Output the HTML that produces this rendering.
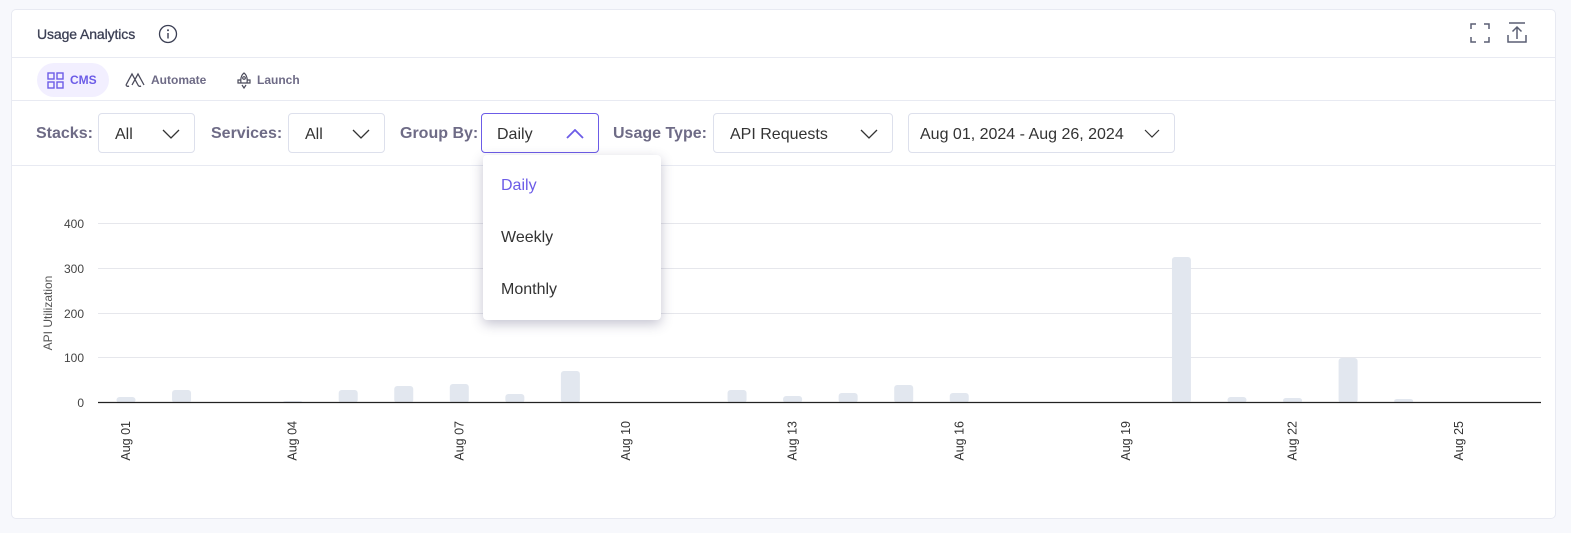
<!DOCTYPE html>
<html><head><meta charset="utf-8"><style>
*{box-sizing:border-box;margin:0;padding:0}
body{width:1571px;height:533px;background:#f7f8fc;font-family:"Liberation Sans",sans-serif;position:relative;overflow:hidden}
.card{position:absolute;left:11px;top:9px;width:1545px;height:510px;background:#fff;border:1px solid #e8eaf2;border-radius:5px}
.abs{position:absolute}
.title{left:25px;top:16px;font-size:14px;color:#3b3f54;letter-spacing:-0.1px;-webkit-text-stroke:0.3px #3b3f54}
.hr{position:absolute;left:0;right:0;height:1px;background:#e8eaf2}
.tab{position:absolute;top:53px;height:34px;border-radius:17px;font-size:12px;font-weight:bold;color:#6e6b86;display:flex;align-items:center;gap:6px;padding:0 10px}
.lbl{position:absolute;font-size:16px;color:#6e6b86;font-weight:bold;top:115px}
.sel{position:absolute;top:103px;height:40px;border:1px solid #dde0ec;border-radius:4px;font-size:16px;color:#333;display:flex;align-items:center;padding-left:16px;padding-top:3px}
.sel svg{position:absolute;right:14px;top:15px}
.menu{position:absolute;left:483px;top:155px;width:178px;height:165px;background:#fff;border-radius:4px;box-shadow:0 4px 12px rgba(60,55,100,.3)}
.menu div{position:absolute;left:18px;font-size:16px;color:#333}
</style></head><body>
<div class="card">
 <div class="abs title">Usage Analytics</div>
 <svg class="abs" style="left:146px;top:14px" width="20" height="20" viewBox="0 0 20 20"><circle cx="10" cy="10" r="8.5" fill="none" stroke="#3b3f54" stroke-width="1.3"/><circle cx="10" cy="6.2" r="1" fill="#3b3f54"/><path d="M10 9v5.5" stroke="#3b3f54" stroke-width="1.4"/></svg>
 <svg class="abs" style="left:1458px;top:13px" width="20" height="20" viewBox="0 0 20 20" fill="none" stroke="#5a5f73" stroke-width="1.5"><path d="M1 6V1h5M14 1h5v5M19 14v5h-5M6 19H1v-5"/></svg>
 <svg class="abs" style="left:1495px;top:12px" width="20" height="22" viewBox="0 0 20 22" fill="none" stroke="#5a5f73" stroke-width="1.5"><path d="M2 1h16M10 17V5M5.5 9.5L10 5l4.5 4.5M1 13v7h18v-7"/></svg>
 <div class="hr" style="top:47px"></div>
 <div class="tab" style="left:25px;background:#f2efff;color:#6c5ce7;width:72px"><svg width="17" height="17" viewBox="0 0 17 17" fill="none" stroke="#6c5ce7" stroke-width="1.4"><rect x="1" y="1" width="6" height="6"/><rect x="10" y="1" width="6" height="6"/><rect x="1" y="10" width="6" height="6"/><rect x="10" y="10" width="6" height="6"/></svg>CMS</div>
 <div class="tab" style="left:103px"><svg width="20" height="16" viewBox="0 0 20 16" fill="none" stroke="#4a4a5a" stroke-width="1.3"><path d="M1 13L7 2l6 11M7 13l6-11 6 11M1 13q1 2 3 1M13 13q1 2 3 1"/></svg>Automate</div>
 <div class="tab" style="left:215px"><svg width="14" height="17" viewBox="0 0 14 17" fill="none" stroke="#4a4a5a" stroke-width="1.2"><path d="M7 1q4 3 3 10H4Q3 4 7 1zM4 8H1v3h3M10 8h3v3h-3M5 13l2 3 2-3"/><circle cx="7" cy="6" r="1.3"/></svg>Launch</div>
 <div class="hr" style="top:90px"></div>
 <div class="lbl" style="left:24px">Stacks:</div>
 <div class="sel" style="left:86px;width:97px">All<svg width="18" height="10" viewBox="0 0 18 10"><path d="M1 1l8 8 8-8" fill="none" stroke="#333" stroke-width="1.3"/></svg></div>
 <div class="lbl" style="left:199px">Services:</div>
 <div class="sel" style="left:276px;width:97px">All<svg width="18" height="10" viewBox="0 0 18 10"><path d="M1 1l8 8 8-8" fill="none" stroke="#333" stroke-width="1.3"/></svg></div>
 <div class="lbl" style="left:388px">Group By:</div>
 <div class="sel" style="left:469px;width:118px;border:1.5px solid #6c5ce7;padding-left:15px">Daily<svg width="18" height="10" viewBox="0 0 18 10"><path d="M1 9l8-8 8 8" fill="none" stroke="#6c5ce7" stroke-width="1.8"/></svg></div>
 <div class="lbl" style="left:601px">Usage Type:</div>
 <div class="sel" style="left:701px;width:180px">API Requests<svg width="18" height="10" viewBox="0 0 18 10"><path d="M1 1l8 8 8-8" fill="none" stroke="#333" stroke-width="1.3"/></svg></div>
 <div class="sel" style="left:896px;width:267px;padding-left:11px">Aug 01, 2024 - Aug 26, 2024<svg style="right:14px" width="16" height="10" viewBox="0 0 16 10"><path d="M1 1l7 7 7-7" fill="none" stroke="#333" stroke-width="1.2"/></svg></div>
 <div class="hr" style="top:155px"></div>
</div>
<svg class="abs" style="left:0;top:0" width="1571" height="533" font-family="Liberation Sans, sans-serif">
 <g stroke="#e6e7ec" stroke-width="1"><path d="M98 223.5H1541M98 268.5H1541M98 313.5H1541M98 357.5H1541"/></g>
 <g fill="#e2e7ef" id="bars"></g>
 <path d="M98 402.5H1541" stroke="#222" stroke-width="1.2"/>
 <g font-size="12" fill="#444" text-anchor="end"><text x="84" y="228">400</text><text x="84" y="273">300</text><text x="84" y="318">200</text><text x="84" y="362">100</text><text x="84" y="407">0</text></g>
 <text transform="translate(52,313) rotate(-90)" font-size="12" fill="#555" text-anchor="middle">API Utilization</text>
 <g font-size="12.5" fill="#333" text-anchor="end" id="xl"></g>
</svg>
<div class="menu"><div style="top:22px;color:#6c5ce7">Daily</div><div style="top:74px">Weekly</div><div style="top:126px">Monthly</div></div>
<script>
var h=[5,12,0,1,12,16,18,8,31,0,0,12,6,9,17,9,0,0,0,145,5,4,44,3,0];
var g=document.getElementById('bars'),s='';
h.forEach(function(v,i){if(!v)return;var c=126+55.55*i;s+='<rect x="'+(c-9.5)+'" y="'+(402-v)+'" width="19" height="'+(v+1)+'" rx="3"/>';});
g.innerHTML=s;
var d=['01','04','07','10','13','16','19','22','25'],t='';
d.forEach(function(x,k){var c=126+55.55*3*k+4;t+='<text transform="translate('+c+',421) rotate(-90)">Aug '+x+'</text>';});
document.getElementById('xl').innerHTML=t;
</script>
</body></html>
